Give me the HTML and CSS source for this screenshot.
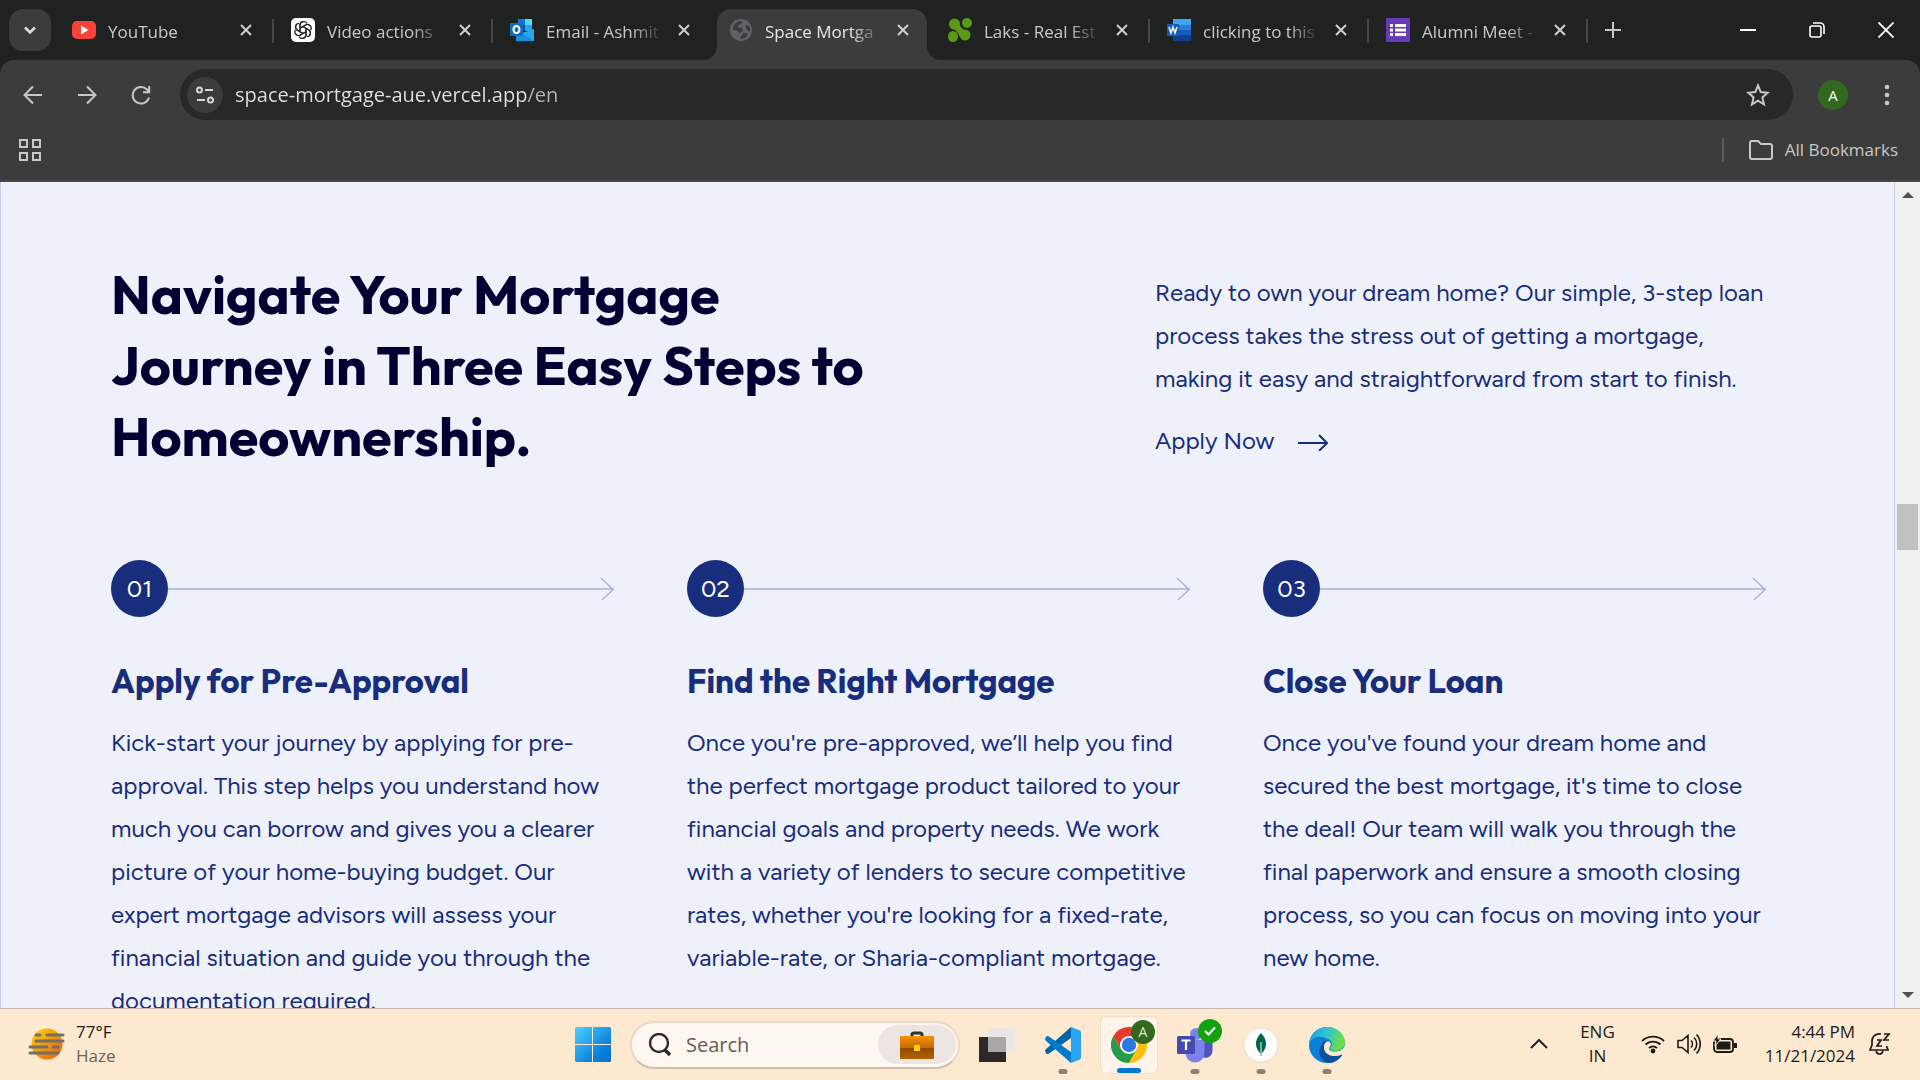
FILE: index.html
```html
<!DOCTYPE html>
<html lang="en">
<head>
<meta charset="utf-8">
<meta name="viewport" content="width=device-width, initial-scale=1">
<title>Space Mortgage</title>
<link rel="stylesheet" href="styles.css">
</head>
<body>
<header class="browser">
  <div class="tabstrip">
    <button class="tab-search" aria-label="Search tabs"><svg width="16" height="16" viewBox="0 0 16 16"><path d="M3 5.5l5 5 5-5" fill="none" stroke="#dedede" stroke-width="2.6"/></svg></button>
    <nav class="tabs" aria-label="Tabs">
      <div class="tab">
        <svg class="favicon" viewBox="0 0 24 24"><rect y="3" width="24" height="18" rx="5" fill="#f9423a"/><path d="M9 7.5v9l7.500-4.500z" fill="#fff"/></svg>
        <a class="tab-title" href="#">YouTube</a>
        <button class="tab-close" aria-label="Close tab"><svg viewBox="0 0 14 14"><path d="M2 2l10 10M12 2L2 12"/></svg></button>
      </div>
      <div class="tab">
        <svg class="favicon" viewBox="0 0 24 24"><rect width="24" height="24" rx="5" fill="#fff"/><g fill="none" stroke="#222" stroke-width="1.200" transform="translate(12 12)"><path id="petal" d="M-3 1.700V-4.600A3.700 3.700 0 0 1 3.900-6.600M-3-1.700L2.600-5a3.700 3.700 0 0 1 5.300 2"/><use href="#petal" transform="rotate(60)"/><use href="#petal" transform="rotate(120)"/><use href="#petal" transform="rotate(180)"/><use href="#petal" transform="rotate(240)"/><use href="#petal" transform="rotate(300)"/></g></svg>
        <a class="tab-title" href="#">Video actions</a>
        <button class="tab-close" aria-label="Close tab"><svg viewBox="0 0 14 14"><path d="M2 2l10 10M12 2L2 12"/></svg></button>
      </div>
      <div class="tab">
        <svg class="favicon" viewBox="0 0 24 24"><path d="M8 1h14v12H8z" fill="#28a8ea"/><path d="M8 1h7v6H8z" fill="#0f78d4"/><path d="M15 1h7v6h-7z" fill="#50d9ff"/><path d="M8 7h7v6H8z" fill="#0a4f9e"/><path d="M6 10l9 6 9-5v12H6z" fill="#1490df"/><path d="M24 11v12L12 15z" fill="#28a8ea"/><rect y="5" width="13" height="13" rx="1" fill="#0f6cbd"/><ellipse cx="6.500" cy="11.500" rx="3" ry="3.500" fill="none" stroke="#fff" stroke-width="2"/></svg>
        <a class="tab-title" href="#">Email - Ashmit</a>
        <button class="tab-close" aria-label="Close tab"><svg viewBox="0 0 14 14"><path d="M2 2l10 10M12 2L2 12"/></svg></button>
      </div>
      <div class="tab active">
        <svg class="tab-shape" width="238" height="51" viewBox="0 0 238 51" preserveAspectRatio="none"><path d="M0 51a14 14 0 0 0 14-14V14A14 14 0 0 1 28 0h182a14 14 0 0 1 14 14v23a14 14 0 0 0 14 14z" fill="#3c3c3c"/></svg>
        <svg class="favicon" viewBox="0 0 24 24"><circle cx="12" cy="12" r="11" fill="#5f6368"/><path d="M13 3c-1 1.500 0 2-1 3s-3 0-3 2 1 1.500 3 1.500 2.500 3 .5 4.500-2 1-3 0-2.500-2-6-2a9 9 0 0 1 9.500-9zM17 7l3.500 1.500a9 9 0 0 1 .5 5q-2 0-2.500-1.500C18 10.500 16 10 17 7zM14 15h4q1 1 0 3a9.300 9.300 0 0 1-7 3q0-3 1.500-3.500T14 15z" fill="#3c3c3c"/></svg>
        <a class="tab-title" href="#" aria-current="page">Space Mortga</a>
        <button class="tab-close" aria-label="Close tab"><svg viewBox="0 0 14 14"><path d="M2 2l10 10M12 2L2 12"/></svg></button>
      </div>
      <div class="tab">
        <svg class="favicon" viewBox="0 0 24 24"><g fill="#5b9a16"><ellipse cx="6.500" cy="6" rx="5.500" ry="5.500"/><ellipse cx="19" cy="5" rx="5" ry="5"/><ellipse cx="5" cy="18.500" rx="5" ry="5.500"/><ellipse cx="17" cy="17" rx="5.500" ry="5.500"/><path d="M3 10q5 1 8.500 8l9-3.500q-7-3-9.500-9z"/></g></svg>
        <a class="tab-title" href="#">Laks - Real Est</a>
        <button class="tab-close" aria-label="Close tab"><svg viewBox="0 0 14 14"><path d="M2 2l10 10M12 2L2 12"/></svg></button>
      </div>
      <div class="tab">
        <svg class="favicon" viewBox="0 0 24 24"><path d="M6 1h18v6H6z" fill="#41a5ee"/><path d="M6 7h18v5H6z" fill="#2b7cd3"/><path d="M6 12h18v5H6z" fill="#185abd"/><path d="M6 17h18v6H6z" fill="#103f91"/><rect y="6" width="12" height="12" rx="1" fill="#185abd"/><path d="M2 9l2 6 2-6 2 6 2-6" fill="none" stroke="#fff" stroke-width="1.500"/></svg>
        <a class="tab-title" href="#">clicking to this</a>
        <button class="tab-close" aria-label="Close tab"><svg viewBox="0 0 14 14"><path d="M2 2l10 10M12 2L2 12"/></svg></button>
      </div>
      <div class="tab">
        <svg class="favicon" viewBox="0 0 24 24"><rect width="24" height="24" rx="1" fill="#673ab7"/><path d="M4 6h3v3H4zM9 6h11v3H9zM4 10.500h3v3H4zM9 10.500h11v3H9zM4 15h3v3H4zM9 15h11v3H9z" fill="#fff"/></svg>
        <a class="tab-title" href="#">Alumni Meet -</a>
        <button class="tab-close" aria-label="Close tab"><svg viewBox="0 0 14 14"><path d="M2 2l10 10M12 2L2 12"/></svg></button>
      </div>
    </nav>
    <button class="new-tab" aria-label="New tab"><svg width="16" height="16" viewBox="0 0 16 16"><path d="M8 0v16M0 8h16" stroke="#c8c8c8" stroke-width="2"/></svg></button>
    <div class="window-controls">
      <button aria-label="Minimize"><svg width="16" height="16" viewBox="0 0 16 16"><path d="M0 8h16" stroke="#fff" stroke-width="2"/></svg></button>
      <button aria-label="Restore"><svg width="16" height="16" viewBox="0 0 16 16" fill="none" stroke="#fff" stroke-width="1.600"><rect x="1" y="4" width="11" height="11" rx="2"/><path d="M4 1h7a4 4 0 0 1 4 4v7"/></svg></button>
      <button aria-label="Close"><svg width="16" height="16" viewBox="0 0 16 16"><path d="M.5.5l15 15M15.500.5l-15 15" stroke="#fff" stroke-width="1.800"/></svg></button>
    </div>
  </div>
  <div class="toolbar">
    <div class="nav-buttons">
      <button aria-label="Back"><svg width="20" height="20" viewBox="0 0 20 20"><path d="M19 10H2M10 1.500L1.500 10l8.500 8.500"/></svg></button>
      <button aria-label="Forward"><svg width="20" height="20" viewBox="0 0 20 20"><path d="M1 10h17M10 1.500l8.500 8.500-8.500 8.500"/></svg></button>
      <button aria-label="Reload"><svg width="20" height="20" viewBox="0 0 20 20"><path d="M18 12.500A8.300 8.300 0 1 1 16 4.500l2 2.500M18.200 1v6.200H12"/></svg></button>
    </div>
    <div class="omnibox">
      <button class="site-info" aria-label="View site information"><svg width="20" height="20" viewBox="0 0 20 20" fill="none" stroke="#d6d6d6" stroke-width="2"><circle cx="4.500" cy="5" r="2.500"/><path d="M10 5h8M2 15h8"/><circle cx="15.500" cy="15" r="2.500"/></svg></button>
      <input class="url" type="text" aria-label="Address" value="space-mortgage-aue.vercel.app/en">
      <button class="star" aria-label="Bookmark this tab"><svg width="24" height="24" viewBox="0 0 24 24"><path d="M12 2.500l2.700 6.600 7.100.6-5.400 4.700 1.600 7L12 17.700l-6 3.700 1.600-7-5.400-4.700 7.100-.6z" fill="none" stroke="#c8c8c8" stroke-width="2"/></svg></button>
    </div>
    <button class="avatar" aria-label="Profile">A</button>
    <button class="menu" aria-label="Menu"><svg width="6" height="22" viewBox="0 0 6 22" fill="#c8c8c8"><circle cx="3" cy="3" r="2.300"/><circle cx="3" cy="11" r="2.300"/><circle cx="3" cy="19" r="2.300"/></svg></button>
  </div>
  <div class="bookmarks">
    <button aria-label="Apps"><svg width="22" height="22" viewBox="0 0 22 22" fill="none" stroke="#c8c8c8" stroke-width="2"><path d="M1 1h7v7H1zM14 1h7v7h-7zM1 14h7v7H1zM14 14h7v7h-7z"/></svg></button>
    <button class="all-bookmarks"><svg width="24" height="20" viewBox="0 0 24 20"><path d="M1 3a2 2 0 0 1 2-2h6l3 3h9a2 2 0 0 1 2 2v11a2 2 0 0 1-2 2H3a2 2 0 0 1-2-2z" fill="none" stroke="#c8c8c8" stroke-width="2"/></svg>All Bookmarks</button>
  </div>
</header>

<div class="viewport">
  <main class="page">
    <section class="intro">
      <h1>Navigate Your Mortgage<br>Journey in Three Easy Steps to<br>Homeownership.</h1>
      <div class="intro-text">
        <p>Ready to own your dream home? Our simple, 3-step loan<br>process takes the stress out of getting a mortgage,<br>making it easy and straightforward from start to finish.</p>
        <a class="apply" href="#">Apply Now <svg width="30" height="20" viewBox="0 0 30 20"><path d="M0 12h29M21 4l8 8-8 8" fill="none" stroke="#182d7c" stroke-width="2"/></svg></a>
      </div>
    </section>
    <section class="steps">
      <article class="step">
        <div class="marker"><span class="number">01</span><span class="line"></span><svg width="14" height="24" viewBox="0 0 14 24"><path d="M1 1l12 11.500L2 23"/></svg></div>
        <h2>Apply for Pre-Approval</h2>
        <p>Kick-start your journey by applying for pre-<br>approval. This step helps you understand how<br>much you can borrow and gives you a clearer<br>picture of your home-buying budget. Our<br>expert mortgage advisors will assess your<br>financial situation and guide you through the<br>documentation required.</p>
      </article>
      <article class="step">
        <div class="marker"><span class="number">02</span><span class="line"></span><svg width="14" height="24" viewBox="0 0 14 24"><path d="M1 1l12 11.500L2 23"/></svg></div>
        <h2>Find the Right Mortgage</h2>
        <p>Once you're pre-approved, we’ll help you find<br>the perfect mortgage product tailored to your<br>financial goals and property needs. We work<br>with a variety of lenders to secure competitive<br>rates, whether you're looking for a fixed-rate,<br>variable-rate, or Sharia-compliant mortgage.</p>
      </article>
      <article class="step">
        <div class="marker"><span class="number">03</span><span class="line"></span><svg width="14" height="24" viewBox="0 0 14 24"><path d="M1 1l12 11.500L2 23"/></svg></div>
        <h2>Close Your Loan</h2>
        <p>Once you've found your dream home and<br>secured the best mortgage, it's time to close<br>the deal! Our team will walk you through the<br>final paperwork and ensure a smooth closing<br>process, so you can focus on moving into your<br>new home.</p>
      </article>
    </section>
  </main>
  <div class="scrollbar">
    <svg width="12" height="6" viewBox="0 0 12 6"><path d="M0 6l6-6 6 6z" fill="#505050"/></svg>
    <div class="track"><div class="thumb"></div></div>
    <svg width="12" height="6" viewBox="0 0 12 6"><path d="M0 0l6 6 6-6z" fill="#505050"/></svg>
  </div>
</div>

<footer class="taskbar">
  <div class="weather">
    <svg width="38" height="34" viewBox="0 0 38 34"><defs><linearGradient id="sun" x1="0" y1="0" x2="1" y2="1"><stop offset="0" stop-color="#ffd400"/><stop offset="1" stop-color="#e8590c"/></linearGradient></defs><circle cx="19" cy="17" r="15.500" fill="url(#sun)"/><path d="M8 8h4M19 8h16M8 14h27M2 20h17M25 20h5M2 26h28" stroke="#6f6f6f" stroke-width="3" stroke-linecap="round"/></svg>
    <div class="weather-text"><span>77°F</span><span class="muted">Haze</span></div>
  </div>
  <div class="apps">
    <button class="app" aria-label="Start"><svg width="36" height="36" viewBox="0 0 36 36"><defs><linearGradient id="win" gradientUnits="userSpaceOnUse" x1="0" y1="0" x2="36" y2="36"><stop offset="0" stop-color="#4fd0ff"/><stop offset=".7" stop-color="#0a80dc"/><stop offset="1" stop-color="#0070cf"/></linearGradient></defs><path d="M1 0h16v17H0V1zM18 0h17l1 1v16H18zM0 18h17v17H1l-1-1zM18 18h18v16l-1 1H18z" fill="url(#win)"/></svg></button>
    <div class="search">
      <svg width="24" height="24" viewBox="0 0 24 24" fill="none" stroke="#2b2b2b"><circle cx="11" cy="10" r="9" stroke-width="2.400"/><path d="M17 17l5 5" stroke-width="3.500"/></svg>
      <input type="text" placeholder="Search" aria-label="Search">
      <button class="highlight" aria-label="Search highlights"><svg width="34" height="28" viewBox="0 0 34 28"><defs><linearGradient id="case" x1="0" y1="0" x2="0" y2="1"><stop offset="0" stop-color="#f59300"/><stop offset=".5" stop-color="#c86c00"/><stop offset=".52" stop-color="#8f4a00"/><stop offset="1" stop-color="#b66200"/></linearGradient></defs><path d="M12 6V3a2 2 0 0 1 2-1h6a2 2 0 0 1 2 1v3" fill="none" stroke="#333" stroke-width="3"/><rect y="5" width="34" height="23" rx="1" fill="url(#case)"/><rect x="14" y="14" width="6" height="6" fill="#ffd21a"/></svg></button>
    </div>
    <button class="app" aria-label="Task view"><svg width="36" height="34" viewBox="0 0 36 34"><path d="M0 9h27v25H0z" fill="#2b2a29"/><path d="M9 0h27v24H9z" fill="#e9e8e7"/><path d="M9 9h18v15H9z" fill="#a9a8a6"/></svg></button>
    <button class="app running" aria-label="Visual Studio Code"><svg width="36" height="36" viewBox="0 0 36 36"><path d="M26 0v11L4 26.500c-1 .8-2 .8-3-.3L.5 25c-.8-1-.6-2 .3-2.800z" fill="#0065a9"/><path d="M26 36V25L4 9.500c-1-.8-2-.8-3 .3L.5 11c-.8 1-.6 2 .3 2.800z" fill="#007acc"/><path d="M26 0l9 3.500 1 1.500v26l-1 1.500-9 3.500z" fill="#29a4f3"/></svg></button>
    <button class="app running current" aria-label="Google Chrome"><svg width="36" height="36" viewBox="0 0 36 36"><path d="M18 18l7.800 4.500L18 36A18 18 0 0 1 2.400 9l7.800 13.500z" fill="#259c46"/><path d="M18 9h15.600A18 18 0 0 0 2.400 9l7.800 13.500z" fill="#e33b2e"/><path d="M18 9h15.600A18 18 0 0 1 18 36l7.800-13.500z" fill="#fcbf10"/><circle cx="18" cy="18" r="9" fill="#fff"/><circle cx="18" cy="18" r="7.200" fill="#2b77e8"/></svg><span class="badge profile">A</span></button>
    <button class="app running" aria-label="Microsoft Teams"><svg width="36" height="36" viewBox="0 0 36 36"><path d="M19 13h15a1.500 1.500 0 0 1 1.500 1.500V24a7 7 0 0 1-9 6.500z" fill="#4b53bc"/><circle cx="19" cy="7" r="6" fill="#7b83eb"/><path d="M10 13h16a1.500 1.500 0 0 1 1.500 1.500V26a9.500 9.500 0 0 1-19 0V14z" fill="#7b83eb"/><rect y="9" width="18" height="18" rx="1.500" fill="#444ab0"/><path d="M4.500 13.500h9M9 13.500V23" stroke="#fff" stroke-width="2.200"/></svg><span class="badge ok"><svg width="12" height="10" viewBox="0 0 12 10"><path d="M1 5l3.500 3.500L11 1.500" fill="none" stroke="#fff" stroke-width="2.200"/></svg></span></button>
    <button class="app running" aria-label="MongoDB Compass"><svg width="36" height="36" viewBox="0 0 36 36"><circle cx="18" cy="18" r="17" fill="#fcfcfb" stroke="#d9d3cc" stroke-width=".6"/><path d="M18 6c7 7 6.500 15 0 21-6.500-6-7-14 0-21z" fill="#00684a"/><path d="M18 15v14" stroke="#9cc5b4" stroke-width="1.600"/></svg></button>
    <button class="app running" aria-label="Microsoft Edge"><svg width="36" height="36" viewBox="0 0 36 36"><defs><linearGradient id="edge" x1="0" y1="0" x2="1" y2=".3"><stop offset="0" stop-color="#1b9de2"/><stop offset=".5" stop-color="#2fc2d6"/><stop offset="1" stop-color="#69e04a"/></linearGradient></defs><circle cx="18" cy="18" r="18" fill="#0c7fd8"/><path d="M0 17C1 7 9 0 18 0c10 0 18 7 18 15 0 6-4 9-9 9-4 0-6-1-6-3 0-1 2-2 2-4 0-3-3-5-6-6C9 8 2 11 0 17z" fill="url(#edge)"/><path d="M12 19c-4 6-1 15 8 17 5 0 10-3 13-7.500 1-1.500 0-2-1-1.500-9 4-18 0-17-8 0-3 2-5 4-5-4-1-6 3-7 5z" fill="#104f9c"/><path d="M36 18v12l-3-2.500c-9 4-18 0-18-7 0-4 2-6.500 5-6 2 1 2.500 3 1 5-2 3 0 5 5 5 5 0 9-2 10-6.500z" fill="#fde8d0"/></svg></button>
  </div>
  <div class="tray">
    <button class="chevron" aria-label="Show hidden icons"><svg width="18" height="10" viewBox="0 0 18 10"><path d="M1 9l8-8 8 8" fill="none" stroke="#222" stroke-width="2"/></svg></button>
    <button class="lang">ENG<br>IN</button>
    <button class="status" aria-label="Network, volume and battery">
      <svg width="24" height="20" viewBox="0 0 24 20" fill="none" stroke="#1f1b18" stroke-width="1.800"><path d="M1 7a16 16 0 0 1 22 0M4.500 10.500a11 11 0 0 1 15 0M8 14a6 6 0 0 1 8 0"/><circle cx="12" cy="17" r="1.500" fill="#1f1b18"/></svg>
      <svg width="24" height="20" viewBox="0 0 24 20" fill="none" stroke="#1f1b18" stroke-width="1.600"><path d="M1 6.500h4l6-5v17l-6-5H1zM14 6.500a5 5 0 0 1 0 7M17 3.500a9 9 0 0 1 0 13M19.500.5a14 14 0 0 1 0 19"/></svg>
      <svg width="24" height="20" viewBox="0 0 24 20"><rect x="1" y="5" width="19" height="13" rx="3" fill="none" stroke="#1f1b18" stroke-width="1.800"/><path d="M3.500 7.500h14v8h-14zM21 9h3v5h-3z" fill="#1f1b18"/><path d="M5 0L0 7h3l-1 5 6-7H5z" fill="#1f1b18" stroke="#fde8d0" stroke-width="1"/></svg>
    </button>
    <button class="clock">4:44 PM<br>11/21/2024</button>
    <button class="bell" aria-label="Notifications"><svg width="24" height="24" viewBox="0 0 24 24" fill="none" stroke="#1f1b18" stroke-width="1.700"><path d="M13 2c-6-1-9 3-9 7v4l-2 5h18l-1.500-4M8 19c1 4 6 4 7 0M9 8h4l-4 6h5M16 2h5l-5 6h5"/></svg></button>
  </div>
</footer>
</body>
</html>
```
FILE: styles.css
```css
* { box-sizing: border-box; }

body {
  margin: 0;
  height: 100vh;
  display: flex;
  flex-direction: column;
  overflow: hidden;
  font-family: "Segoe UI", "Open Sans", sans-serif;
  color: #1f1b18;
}

button {
  display: flex;
  align-items: center;
  justify-content: center;
  padding: 0;
  border: 0;
  background: none;
  font: inherit;
  color: inherit;
}

input {
  min-width: 0;
  flex: 1;
  padding: 0;
  border: 0;
  outline: 0;
  background: none;
  font: inherit;
}

a { color: inherit; text-decoration: none; }
svg { display: block; flex: none; }
h1, h2, p { margin: 0; }

/* Browser frame */
.browser { flex: none; background: #202221; color: #c8c8c8; }

.tabstrip { display: flex; align-items: center; height: 60px; padding-left: 9px; }
.tab-search { width: 42px; height: 42px; border-radius: 14px; background: #3c3c3c; }
.tabs { display: flex; align-self: stretch; margin-left: 4px; min-width: 0; }

.tab {
  position: relative;
  display: flex;
  align-items: center;
  width: 219px;
  min-width: 0;
  padding: 0 16px 0 17px;
}
.tab::after {
  content: "";
  position: absolute;
  right: 0;
  top: 19px;
  width: 2px;
  height: 24px;
  background: #444645;
}
.tab:has(+ .active)::after, .tab.active::after { display: none; }
.tab > * { position: relative; }
.tab > .tab-shape { position: absolute; left: -9px; bottom: 0; }
.favicon { width: 24px; height: 24px; }
.tab-title {
  flex: 1;
  margin: 0 4px 0 12px;
  padding-top: 3px;
  overflow: hidden;
  white-space: nowrap;
  font-size: 17px;
  line-height: 24px;
  mask-image: linear-gradient(to right, #000 70%, transparent 96%);
}
.active .tab-title { color: #e6e6e6; }
.tab-close { width: 24px; height: 24px; }
.tab-close svg { width: 14px; height: 14px; stroke: #d0d0d0; stroke-width: 2; }
.new-tab { width: 40px; height: 40px; margin-left: 5px; }
.window-controls { display: flex; margin-left: auto; }
.window-controls button { width: 69px; height: 58px; }

.toolbar {
  display: flex;
  align-items: center;
  height: 69px;
  padding: 0 13px 0 6px;
  background: #3c3c3c;
  border-radius: 14px 14px 0 0;
}
.nav-buttons { display: flex; }
.nav-buttons button { width: 54px; height: 48px; }
.nav-buttons path { fill: none; stroke: #c8c8c8; stroke-width: 2; }
.omnibox {
  display: flex;
  align-items: center;
  flex: 1;
  height: 51px;
  margin-left: 12px;
  padding: 0 23px 0 7px;
  border-radius: 26px;
  background: #282828;
}
.site-info { width: 36px; height: 36px; border-radius: 50%; background: #3c3c3c; }
/* The path part of the address is dimmer than the host */
.url {
  margin-left: 12px;
  font-size: 20px;
  line-height: 28px;
  color: #e2e2e2;
  background: linear-gradient(to right, #e2e2e2 293px, #b4b4b4 293px);
  background-clip: text;
  -webkit-text-fill-color: transparent;
}
.avatar { width: 30px; height: 30px; margin-left: 25px; border-radius: 50%; background: #33691e; color: #fff; font-size: 15px; }
.menu { width: 40px; height: 40px; margin-left: 19px; }

.bookmarks {
  display: flex;
  align-items: center;
  justify-content: space-between;
  height: 53px;
  padding: 0 22px 10px 19px;
  background: #3c3c3c;
  border-bottom: 2px solid #484848;
}
.all-bookmarks { gap: 12px; padding-left: 25px; border-left: 2px solid #5c5c5c; font-size: 17px; line-height: 24px; }

/* Web page */
.viewport { display: flex; flex: 1; min-height: 0; overflow: hidden; }
.page {
  flex: 1;
  min-width: 0;
  overflow: hidden;
  padding: 77px 127px 0 110px;
  border: solid #c9cee6;
  border-width: 0 1px;
  background: #eef1fa;
  color: #182d7c;
  font-family: Figtree, Lato, sans-serif;
  font-size: 24px;
  line-height: 43px;
  white-space: nowrap;
}
.intro { display: grid; grid-template-columns: 1fr 612px; }
h1 { color: #000032; font-family: Outfit, Lato, sans-serif; font-size: 54px; font-weight: 700; line-height: 71px; }
.intro-text { padding-top: 12px; }
.apply { display: inline-flex; align-items: center; gap: 24px; margin-top: 19px; }
.steps { display: grid; grid-template-columns: repeat(3, 1fr); gap: 72px; margin-top: 88px; }
.step { min-width: 0; }
.marker { display: flex; align-items: center; padding-right: 1px; }
.marker svg { margin-left: -14px; }
.marker path { fill: none; stroke: #a9b2d3; stroke-width: 1.3; }
.number {
  display: flex;
  align-items: center;
  justify-content: center;
  width: 57px;
  height: 57px;
  border-radius: 50%;
  background: #182d7c;
  color: #fff;
}
.line { flex: 1; height: 2px; background: #b9c1df; }
h2 { margin-top: 42px; font-family: Outfit, Lato, sans-serif; font-size: 33px; font-weight: 700; line-height: 44px; }
.step p { margin-top: 18px; }

.scrollbar {
  display: flex;
  flex-direction: column;
  align-items: center;
  width: 25px;
  padding: 10px 0;
  background: #f0f0f0;
}
.track { display: flex; flex: 1; align-items: center; }
.thumb { width: 21px; height: 46px; margin-bottom: 136px; background: #c1c1c1; }

/* Taskbar */
.taskbar {
  display: grid;
  grid-template-columns: 1fr auto 1fr;
  align-items: center;
  flex: none;
  height: 72px;
  border-top: 1px solid #c5b9ae;
  background: #fde8d0;
  font-size: 17px;
  line-height: 24px;
}
.weather { display: flex; align-items: center; gap: 10px; padding: 0 0 2px 28px; }
.weather-text { display: flex; flex-direction: column; }
.muted { color: #6a625b; }
.apps { display: flex; align-items: center; gap: 8px; }
.app { position: relative; width: 58px; height: 58px; border-radius: 6px; }
.current { background: #fff4ea; border: 1px solid #f3ddc9; }
.running::after {
  content: "";
  position: absolute;
  left: 50%;
  bottom: 0;
  width: 9px;
  height: 5px;
  border-radius: 3px;
  background: #8b8075;
  translate: -50% 0;
}
.current::after { width: 24px; background: #0078d4; }
.badge {
  position: absolute;
  top: 3px;
  right: 2px;
  display: flex;
  align-items: center;
  justify-content: center;
  width: 24px;
  height: 24px;
  border-radius: 50%;
  font-size: 14px;
}
.profile { background: #33691e; color: #dce8d6; }
.ok { background: #13a10e; }
.search {
  display: flex;
  align-items: center;
  width: 330px;
  height: 48px;
  padding: 2px 2px 2px 16px;
  border: 2px solid #ecd8c7;
  border-bottom-color: #cfbfb0;
  border-radius: 24px;
  background: #fff7f0;
}
.search input { margin-left: 14px; font-size: 20px; line-height: 28px; }
.search input::placeholder { color: #625d58; opacity: 1; }
.highlight { width: 78px; height: 39px; border-radius: 20px; background: #ebe6e2; }

.tray { display: flex; align-items: center; justify-content: flex-end; padding: 0 28px 2px 0; }
.status { gap: 12px; margin: 0 28px 0 26px; }
.lang { display: block; margin-left: 32px; text-align: center; }
.clock { display: block; text-align: right; }
.bell { margin-left: 13px; }
```
